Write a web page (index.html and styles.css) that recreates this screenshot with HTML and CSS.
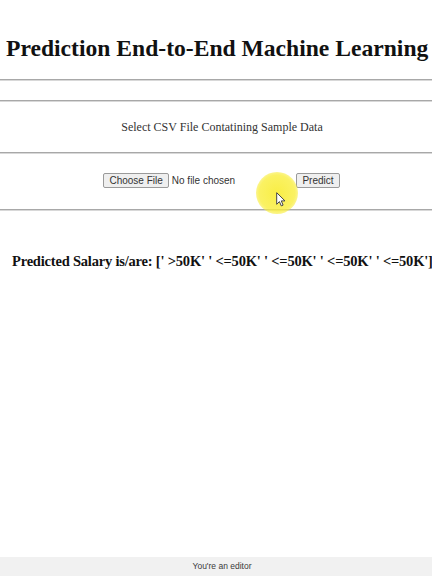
FILE: index.html
```html
<!DOCTYPE html>
<html lang="en">
<head>
<meta charset="utf-8">
<title>Salary Prediction</title>
<link rel="stylesheet" href="styles.css">
</head>
<body>
<div class="page">
  <header class="title"><h1>Prediction End-to-End Machine Learning</h1></header>
  <div class="rule"></div>
  <div class="spacer"></div>
  <div class="rule"></div>
  <section class="select"><p>Select CSV File Contatining Sample Data</p></section>
  <div class="rule"></div>
  <form class="upload">
    <div class="file">
      <span class="btn">Choose File</span>
      <span class="filename">No file chosen</span>
    </div>
    <span class="btn">Predict</span>
  </form>
  <div class="rule"></div>
  <h3 class="result">Predicted Salary is/are: [' &gt;50K' ' &lt;=50K' ' &lt;=50K' ' &lt;=50K' ' &lt;=50K']</h3>

  <div class="highlight"></div>
  <svg class="cursor" width="10" height="15" viewBox="0 0 10 15">
    <path d="M0.7 0.7 L0.7 12.3 L3.4 9.6 L5.3 13.9 L7.1 13.1 L5.3 8.9 L9 8.9 Z" fill="#fff" stroke="#444" stroke-width="1" stroke-linejoin="round"/>
  </svg>
</div>
<div class="toast">You're an editor</div>
</body>
</html>
```

FILE: styles.css
```css
html, body {
  margin: 0;
  padding: 0;
  background: #fff;
  overflow: hidden;
}
.page {
  position: relative;
  width: 432px;
  height: 576px;
  font-family: "Liberation Serif", "Times New Roman", serif;
}
.title {
  padding: 35px 0 17px 6px;
}
.title h1 {
  margin: 0;
  font-size: 23.6px;
  line-height: 27px;
  font-weight: bold;
  color: #111;
  white-space: nowrap;
}
.rule {
  height: 1px;
  border-top: 1px solid #a8a8a8;
  background: #d8d8d8;
}
.spacer {
  height: 19px;
}
.select p {
  margin: 0;
  padding-left: 12px;
  text-align: center;
  font-size: 12px;
  line-height: 50px;
  color: #333;
}
.upload {
  display: flex;
  justify-content: center;
  align-items: center;
  padding: 19px 0 21px 11px;
  font-family: "Liberation Sans", Arial, sans-serif;
  font-size: 10px;
  color: #222;
}
.file {
  display: flex;
  align-items: center;
  width: 193px;
}
.btn {
  display: inline-block;
  padding: 1px 5px;
  line-height: 11px;
  border: 1px solid #9a9a9a;
  border-radius: 2px;
  background: #efefef;
  color: #333;
}
.filename {
  margin-left: 3px;
  color: #333;
}
.result {
  margin: 41px 0 0 0;
  padding-left: 12px;
  font-size: 14.5px;
  line-height: 18px;
  letter-spacing: -0.2px;
  font-weight: bold;
  color: #111;
  white-space: nowrap;
}
.highlight {
  position: absolute;
  left: 256px;
  top: 172px;
  width: 42px;
  height: 42px;
  border-radius: 50%;
  background: radial-gradient(circle, rgba(248, 236, 50, 0.9) 0%, rgba(249, 238, 60, 0.8) 60%, rgba(252, 245, 120, 0) 100%);
}
.cursor {
  position: absolute;
  left: 276px;
  top: 192px;
}
.toast {
  position: fixed;
  left: 0;
  right: 0;
  bottom: 0;
  height: 19px;
  line-height: 19px;
  padding-left: 12px;
  background: #f1f1f1;
  text-align: center;
  font-family: "Liberation Sans", Arial, sans-serif;
  font-size: 8.5px;
  color: #3a3a3a;
}
```
